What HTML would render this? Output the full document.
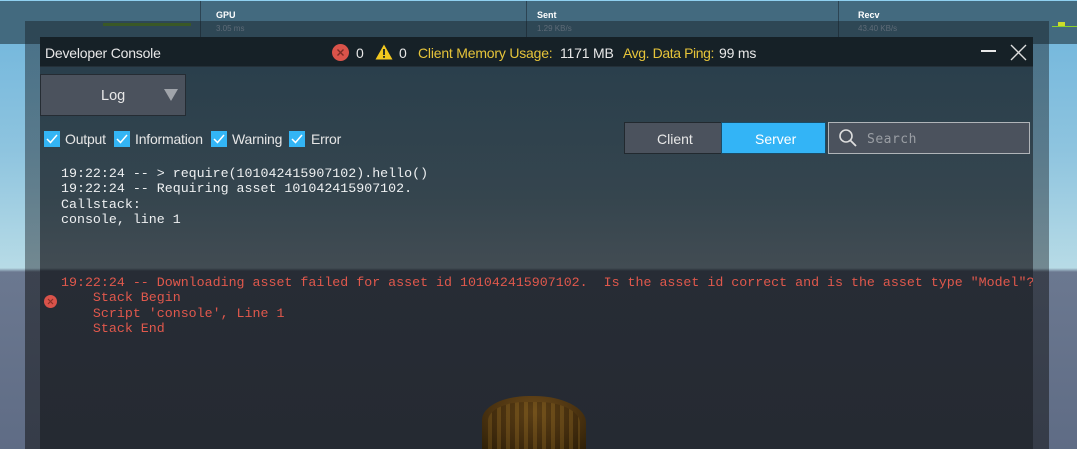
<!DOCTYPE html>
<html style="width:1077px;height:449px;overflow:hidden;background:#5f6c85"><head><meta charset="utf-8"><style>
*{margin:0;padding:0;box-sizing:border-box}
body{width:1077px;height:449px;overflow:hidden;position:relative;font-family:"Liberation Sans",sans-serif;background:linear-gradient(#6db4dc 0px,#8ec4df 150px,#b7dbe6 268px,#6b7890 272px,#5f6c85 449px) no-repeat;background-size:1077px 449px}
.a{position:absolute}
.mono{font-family:"Liberation Mono",monospace;font-size:13.3px;white-space:pre;line-height:15.3px}
.cb{position:absolute;top:131px;width:16px;height:16px;background:#33b5f5}
.cb svg{position:absolute;left:2px;top:3px}
.cl{position:absolute;top:131px;color:#e6e6e6;font-size:14px;letter-spacing:-0.2px}
</style></head><body>
<div class="a" style="left:0;top:0;width:1077px;height:1px;background:#8fd0f0"></div>
<div class="a" style="left:0;top:1px;width:1077px;height:43px;background:#436a7f"></div>
<div class="a" style="left:200px;top:1px;width:1px;height:43px;background:#2c4453"></div>
<div class="a" style="left:526px;top:1px;width:1px;height:43px;background:#2c4453"></div>
<div class="a" style="left:838px;top:1px;width:1px;height:43px;background:#2c4453"></div>
<div class="a" style="left:216px;top:10px;font-size:9px;color:#fff;font-weight:bold">GPU</div>
<div class="a" style="left:216px;top:24px;font-size:8px;color:#9ab">3.05 ms</div>
<div class="a" style="left:537px;top:10px;font-size:9px;color:#fff;font-weight:bold">Sent</div>
<div class="a" style="left:537px;top:24px;font-size:8px;color:#9ab">1.29 KB/s</div>
<div class="a" style="left:858px;top:10px;font-size:9px;color:#fff;font-weight:bold">Recv</div>
<div class="a" style="left:858px;top:24px;font-size:8px;color:#9ab">43.40 KB/s</div>
<div class="a" style="left:103px;top:23px;width:88px;height:3px;background:#5a8a2a"></div>
<div class="a" style="left:1058px;top:22px;width:7px;height:5px;background:#cddc2a"></div>
<div class="a" style="left:1052px;top:26px;width:25px;height:1px;background:#8ad02a"></div>
<!-- panel -->
<div class="a" style="left:25px;top:21px;width:1024px;height:428px;background:linear-gradient(rgba(20,28,34,.45) 0px,rgba(30,36,42,.45) 248px,rgba(40,44,52,.7) 251px,rgba(40,44,52,.75) 428px)"></div>
<div class="a" style="left:40px;top:67px;width:993px;height:382px;background:linear-gradient(#2a3f4c 0px,#35454e 130px,#424c53 201px,#272c35 204px,#252a32 382px)"></div>
<div class="a" style="left:40px;top:37px;width:993px;height:30px;background:#162127;border-bottom:1px solid #243038"></div>
<div class="a" style="left:45px;top:45px;color:#e8e8e8;font-size:14px;letter-spacing:-0.2px">Developer Console</div>
<div class="a" style="left:332px;top:44px;width:17px;height:17px;border-radius:50%;background:#d9534a"></div>
<svg class="a" style="left:332px;top:44px" width="17" height="17"><path d="M5.5 5.5L11.5 11.5M11.5 5.5L5.5 11.5" stroke="#7a2a24" stroke-width="1.4"/></svg>
<div class="a" style="left:356px;top:45px;color:#e8e8e8;font-size:14px">0</div>
<svg class="a" style="left:375px;top:44px" width="18" height="16"><path d="M9 0.5L17.5 15.5H0.5Z" fill="#f2c81f"/><rect x="8.1" y="5" width="1.8" height="6" fill="#162127"/><rect x="8.1" y="12" width="1.8" height="1.8" fill="#162127"/></svg>
<div class="a" style="left:399px;top:45px;color:#e8e8e8;font-size:14px">0</div>
<div class="a" style="left:418px;top:45px;color:#e6c43a;font-size:14px;letter-spacing:-0.2px">Client Memory Usage:</div>
<div class="a" style="left:560px;top:45px;color:#e8e8e8;font-size:14px;letter-spacing:-0.2px">1171 MB</div>
<div class="a" style="left:623px;top:45px;color:#e6c43a;font-size:14px;letter-spacing:-0.4px">Avg. Data Ping:</div>
<div class="a" style="left:719px;top:45px;color:#e8e8e8;font-size:14px;letter-spacing:-0.2px">99 ms</div>
<div class="a" style="left:981px;top:50px;width:15px;height:2px;background:#e8e8e8"></div>
<svg class="a" style="left:1010px;top:44px" width="17" height="17"><path d="M1 1L16 16M16 1L1 16" stroke="#ddd" stroke-width="1.4"/></svg>
<!-- log dropdown -->
<div class="a" style="left:40px;top:74px;width:146px;height:42px;background:#4b525d;border:1px solid #252c33"></div>
<div class="a" style="left:101px;top:88px;color:#e8e8e8;font-size:14.5px">Log</div>
<svg class="a" style="left:164px;top:89px" width="14" height="12"><path d="M0 0H14L7 12Z" fill="#a0a4aa"/></svg>
<!-- checkboxes -->
<div class="cb" style="left:44px"><svg width="12" height="10"><path d="M1 5L4.5 8.5L11 1" stroke="#fff" stroke-width="1.5" fill="none"/></svg></div>
<div class="cl" style="left:65px">Output</div>
<div class="cb" style="left:114px"><svg width="12" height="10"><path d="M1 5L4.5 8.5L11 1" stroke="#fff" stroke-width="1.5" fill="none"/></svg></div>
<div class="cl" style="left:135px">Information</div>
<div class="cb" style="left:211px"><svg width="12" height="10"><path d="M1 5L4.5 8.5L11 1" stroke="#fff" stroke-width="1.5" fill="none"/></svg></div>
<div class="cl" style="left:232px">Warning</div>
<div class="cb" style="left:289px"><svg width="12" height="10"><path d="M1 5L4.5 8.5L11 1" stroke="#fff" stroke-width="1.5" fill="none"/></svg></div>
<div class="cl" style="left:311px">Error</div>
<!-- client/server/search -->
<div class="a" style="left:624px;top:122px;width:98px;height:32px;background:#4b525d;border:1px solid #22292f"></div>
<div class="a" style="left:657px;top:131px;color:#e8e8e8;font-size:14px">Client</div>
<div class="a" style="left:721px;top:122px;width:105px;height:32px;background:#33b4f6;border:1px solid #1c4c66"></div>
<div class="a" style="left:755px;top:131px;color:#fff;font-size:14px">Server</div>
<div class="a" style="left:828px;top:122px;width:202px;height:32px;background:#4b525d;border:1px solid #b0b4b8"></div>
<svg class="a" style="left:838px;top:128px" width="20" height="20"><circle cx="8" cy="8" r="6" stroke="#ddd" stroke-width="1.6" fill="none"/><path d="M12.5 12.5L18 18" stroke="#ddd" stroke-width="1.8"/></svg>
<div class="a" style="left:867px;top:132px;color:#9a9ea4;font-family:'DejaVu Sans Mono',monospace;font-size:13px;letter-spacing:.5px">Search</div>
<!-- log text -->
<div class="a mono" style="left:61px;top:166px;color:#eef0f2">19:22:24 -- &gt; require(101042415907102).hello()
19:22:24 -- Requiring asset 101042415907102.
Callstack:
console, line 1</div>
<div class="a" style="left:44px;top:295px;width:13px;height:13px;border-radius:50%;background:#d9534a"></div>
<svg class="a" style="left:44px;top:295px" width="13" height="13"><path d="M4 4L9 9M9 4L4 9" stroke="#8a3028" stroke-width="1.2"/></svg>
<div class="a mono" style="left:61px;top:275px;color:#e0584c;width:972px;overflow:hidden">19:22:24 -- Downloading asset failed for asset id 101042415907102.  Is the asset id correct and is the asset type "Model"?
    Stack Begin
    Script 'console', Line 1
    Stack End</div>
<!-- hair -->
<div class="a" style="left:482px;top:396px;width:104px;height:53px;border-radius:45% 50% 0 0;background:radial-gradient(ellipse at 50% 30%,#6b4a1a,#4a3210 60%,#2e2008)"></div>
<div class="a" style="left:488px;top:402px;width:92px;height:47px;background:repeating-linear-gradient(90deg,rgba(130,95,30,.35) 0 4px,rgba(40,25,5,.25) 4px 9px);border-radius:40% 45% 0 0"></div>
</body></html>
